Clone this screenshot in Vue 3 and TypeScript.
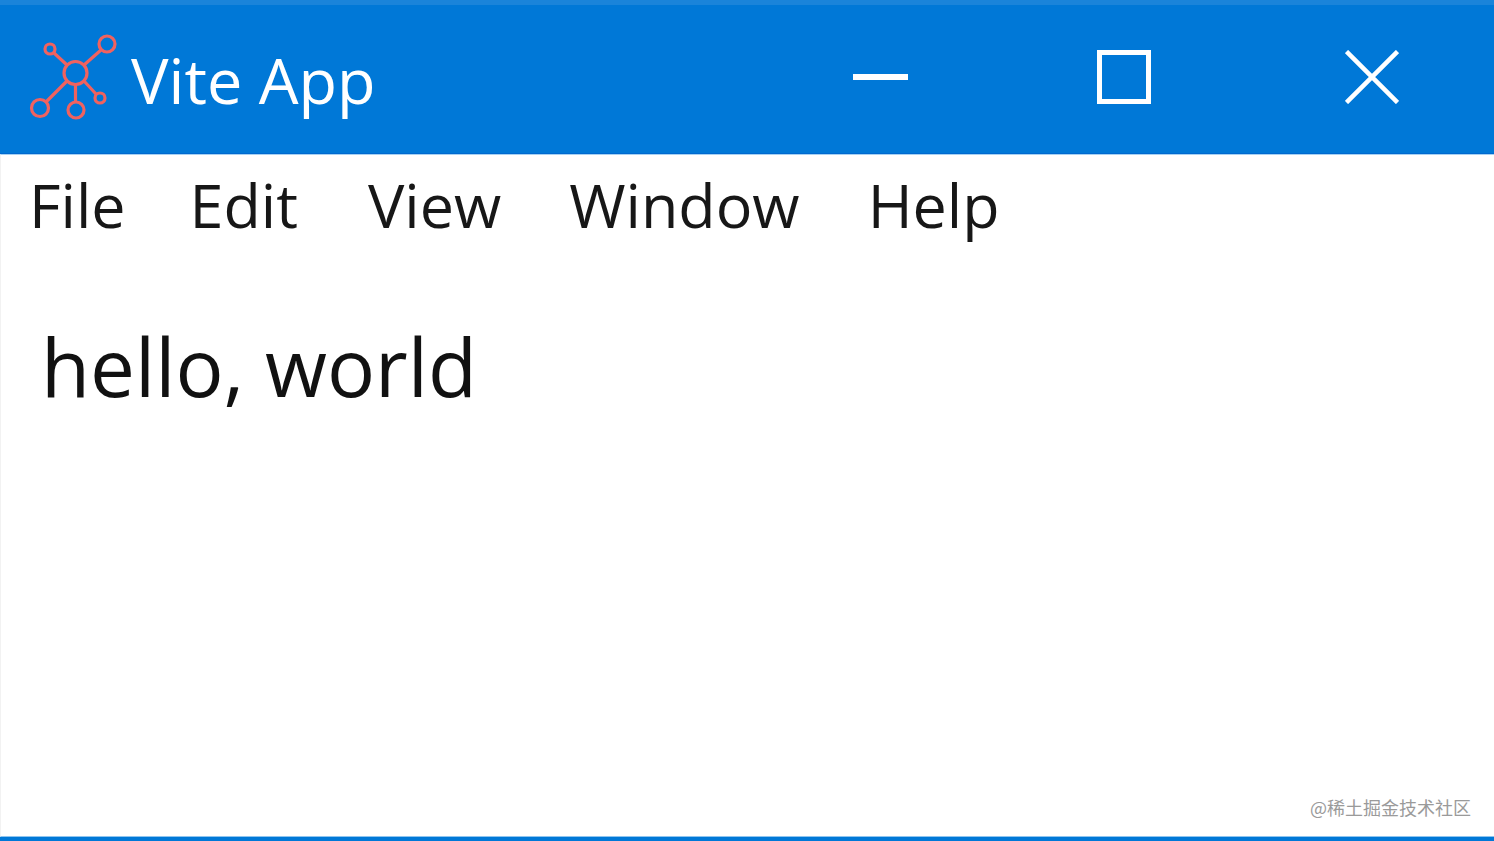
<script setup lang="ts">
const menus: string[] = ['File', 'Edit', 'View', 'Window', 'Help']
</script>

<template>
  <div class="window">
    <header class="titlebar">
      <div class="brand">
        <svg class="logo" width="100" height="100" viewBox="0 0 100 100" fill="none" stroke="#f0625f" stroke-width="3.2">
          <circle cx="50.500" cy="48" r="11.500" />
          <circle cx="82" cy="19" r="8" />
          <circle cx="25" cy="24" r="5" />
          <circle cx="75" cy="73" r="5" />
          <circle cx="15" cy="83" r="8.500" />
          <circle cx="51" cy="85" r="8" />
          <path d="M59 40 L76 25 M42 40 L29 28 M59 56 L71 69 M42 56 L21 77 M50.500 59.500 V77" />
        </svg>
        <span class="title">Vite App</span>
      </div>
      <div class="controls">
        <button class="ctl" aria-label="Minimize"><span class="min"></span></button>
        <button class="ctl" aria-label="Maximize"><span class="max"></span></button>
        <button class="ctl" aria-label="Close">
          <svg width="54" height="54" viewBox="0 0 54 54" stroke="#fff" stroke-width="4.500" fill="none">
            <path d="M1.500 1.500 L52.500 52.500 M52.500 1.500 L1.500 52.500" />
          </svg>
        </button>
      </div>
    </header>
    <div class="body">
      <nav class="menubar">
        <span v-for="m in menus" :key="m" class="menu">{{ m }}</span>
      </nav>
      <main class="content">hello, world</main>
      <div class="watermark">@稀土掘金技术社区</div>
    </div>
  </div>
</template>

<style>
html, body { margin: 0; padding: 0; background: #fff; overflow: hidden; }
</style>

<style scoped>
.window {
  height: 841px;
  box-sizing: border-box;
  display: flex;
  flex-direction: column;
  border-bottom: 4px solid #0078d7;
  background: #fff;
  font-family: "Open Sans", "Noto Sans", sans-serif;
  overflow: hidden;
}
.titlebar {
  height: 154px;
  box-sizing: border-box;
  flex: none;
  display: flex;
  align-items: center;
  justify-content: space-between;
  background: #0078d7;
  border-top: 5px solid #1a84da;
  border-bottom: 1px solid #0069cf;
}
.brand { display: flex; align-items: center; padding-left: 25px; }
.logo { flex: none; margin-top: -9px; }
.title {
  color: #fff;
  font-size: 63px;
  line-height: 70px;
  margin-left: 6px;
  margin-top: 1px;
}
.controls { display: flex; align-self: stretch; }
.ctl {
  width: 245px;
  padding: 0;
  border: 0;
  background: transparent;
  display: flex;
  align-items: center;
  justify-content: center;
  padding-bottom: 5px;
}
.min { display: block; width: 55px; height: 6px; background: #fff; margin-right: 2px; }
.max { display: block; width: 54px; height: 54px; box-sizing: border-box; border: 5px solid #fff; margin-right: 6px; }
.body {
  position: relative;
  flex: 1;
  min-height: 0;
  border-top: 1px solid #a6d1f3;
  border-left: 1px solid #f2f2f2;
  border-bottom: 1px solid #8fc4ee;
}
.menubar {
  display: flex;
  padding: 12px 0 0 28px;
  color: #171717;
  font-size: 61px;
  line-height: 75px;
}
.menu + .menu { margin-left: 68px; }
.menu:nth-child(2) { margin-left: 64px; }
.menu:nth-child(3) { margin-left: 70px; }
.content {
  padding: 74px 0 0 40px;
  color: #111;
  font-size: 80px;
  line-height: 100px;
}
.watermark {
  position: absolute;
  right: 23px;
  bottom: 17px;
  color: #9a9a9a;
  font-size: 18px;
  line-height: 24px;
  font-family: "Noto Sans CJK SC", "Liberation Sans", sans-serif;
}
</style>
